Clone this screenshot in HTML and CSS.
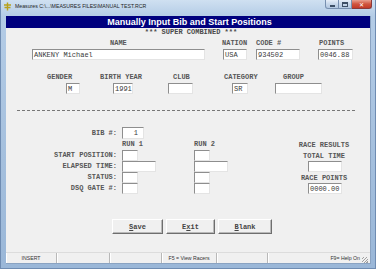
FILE: index.html
```html
<!DOCTYPE html>
<html lang="en">
<head>
    <meta charset="UTF-8">
    <title>Measures - Manual Test</title>
    <link rel="stylesheet" href="styles.css">
</head>
<body>
    <div class="window">
        <div class="titlebar">
            <svg class="app-icon" width="9" height="9" viewBox="0 0 9 9">
                <path d="M4.5 0.5v8M1 3h7M1.5 5.5h6" stroke="#b8a11a" stroke-width="1.4" fill="none"/>
            </svg>
            <span class="title">Measures C:\...\MEASURES FILES\MANUAL TEST.RCR</span>
            <div class="controls">
                <span class="ctl ctl-min"><i></i></span>
                <span class="ctl ctl-max"><i></i></span>
                <span class="ctl ctl-close">&#x2715;</span>
            </div>
        </div>
        <div class="frame">
            <div class="client">
                <div class="header">Manually Input Bib and Start Positions</div>
                <div class="subtitle">*** SUPER COMBINED ***</div>

                <div class="row row-one">
                    <div class="field f-name">
                        <span class="lbl">NAME</span>
                        <span class="box">ANKENY Michael</span>
                    </div>
                    <div class="field f-nation">
                        <span class="lbl">NATION</span>
                        <span class="box">USA</span>
                    </div>
                    <div class="field f-code">
                        <span class="lbl">CODE #</span>
                        <span class="box">934502</span>
                    </div>
                    <div class="field f-points">
                        <span class="lbl">POINTS</span>
                        <span class="box">0046.88</span>
                    </div>
                </div>

                <div class="row row-two">
                    <div class="field f-gender">
                        <span class="lbl">GENDER</span>
                        <span class="box">M</span>
                    </div>
                    <div class="field f-birth">
                        <span class="lbl">BIRTH YEAR</span>
                        <span class="box">1991</span>
                    </div>
                    <div class="field f-club">
                        <span class="lbl">CLUB</span>
                        <span class="box"></span>
                    </div>
                    <div class="field f-cat">
                        <span class="lbl">CATEGORY</span>
                        <span class="box">SR</span>
                    </div>
                    <div class="field f-group">
                        <span class="lbl">GROUP</span>
                        <span class="box"></span>
                    </div>
                </div>

                <div class="divider"></div>

                <div class="runs">
                    <span class="rl">BIB #:</span>
                    <span class="cell"><span class="box bib">1</span></span>
                    <span></span>
                    <span></span>

                    <span></span>
                    <span class="head">RUN 1</span>
                    <span class="head">RUN 2</span>
                    <span class="res">RACE RESULTS</span>

                    <span class="rl">START POSITION:</span>
                    <span class="cell"><span class="box small"></span></span>
                    <span class="cell"><span class="box small"></span></span>
                    <span class="res">TOTAL TIME</span>

                    <span class="rl">ELAPSED TIME:</span>
                    <span class="cell"><span class="box wide"></span></span>
                    <span class="cell"><span class="box wide"></span></span>
                    <span class="res"><span class="box result"></span></span>

                    <span class="rl">STATUS:</span>
                    <span class="cell"><span class="box small"></span></span>
                    <span class="cell"><span class="box small"></span></span>
                    <span class="res">RACE POINTS</span>

                    <span class="rl">DSQ GATE #:</span>
                    <span class="cell"><span class="box small"></span></span>
                    <span class="cell"><span class="box small"></span></span>
                    <span class="res"><span class="box result">0000.00</span></span>
                </div>

                <div class="buttons">
                    <button class="btn btn-save" type="button"><u>S</u>ave</button>
                    <button class="btn btn-exit" type="button">E<u>x</u>it</button>
                    <button class="btn btn-blank" type="button"><u>B</u>lank</button>
                </div>

                <div class="statusbar">
                    <span class="panel p1">INSERT</span>
                    <span class="panel p2"></span>
                    <span class="panel p3"></span>
                    <span class="panel p4">F5 = View Racers</span>
                    <span class="panel p5"></span>
                    <span class="panel p6">F9= Help On<span class="grip"></span></span>
                </div>
            </div>
        </div>
    </div>
</body>
</html>
```

FILE: styles.css
```css
* {
    box-sizing: border-box;
}
body {
    margin: 0;
    width: 376px;
    height: 269px;
    overflow: hidden;
    background-color: #a9c3df;
    font-family: "Liberation Mono", monospace;
}
.window {
    width: 376px;
    height: 269px;
    display: flex;
    flex-direction: column;
    background: linear-gradient(180deg, #cfe0f1 0, #b4cce6 16px, #a4bfdd 60%, #9ab7d8 100%);
    border-left: 1px solid #6f8cb2;
    border-right: 1px solid #6f8cb2;
    border-bottom: 1px solid #6f8cb2;
}
.titlebar {
    height: 16px;
    display: flex;
    align-items: flex-start;
    flex-shrink: 0;
}
.app-icon {
    margin: 2px 0 0 2px;
}
.title {
    margin: 3px 0 0 3px;
    font-family: "Liberation Sans", Arial, sans-serif;
    font-size: 5.2px;
    line-height: 7px;
    color: #1e1e1e;
    white-space: nowrap;
}
.controls {
    margin-left: auto;
    margin-right: 3px;
    display: flex;
}
.ctl {
    height: 9px;
    display: flex;
    align-items: center;
    justify-content: center;
    border: 1px solid #7890b0;
    border-top: none;
    background: linear-gradient(180deg, #e6eef8 0, #c7d7ea 50%, #b3c8e1 100%);
}
.ctl-min {
    width: 14px;
    border-radius: 0 0 0 3px;
}
.ctl-min i {
    width: 5px;
    height: 2px;
    margin-top: 3px;
    background: #3d4f66;
}
.ctl-max {
    width: 13px;
    border-left: none;
}
.ctl-max i {
    width: 6px;
    height: 5px;
    border: 1px solid #3d4f66;
    border-top-width: 2px;
}
.ctl-close {
    width: 20px;
    border-left: none;
    border-radius: 0 0 3px 0;
    border-color: #8a3a3a;
    background: linear-gradient(180deg, #e8a090 0, #d0553f 50%, #c23a28 100%);
    color: #ffffff;
    font-family: "DejaVu Sans", sans-serif;
    font-size: 6px;
    font-weight: bold;
}
.frame {
    flex: 1;
    display: flex;
    padding: 0 4px 4px 5px;
}
.client {
    flex: 1;
    display: flex;
    flex-direction: column;
    background-color: #f0f0f0;
    border: 1px solid #8aa3c2;
    border-top: none;
    border-left: none;
}

.header {
    height: 12px;
    background-color: #00007e;
    color: #ffffff;
    font-family: "Liberation Sans", Arial, sans-serif;
    font-weight: bold;
    font-size: 9px;
    line-height: 12px;
    text-align: center;
    padding-left: 3px;
}
.subtitle {
    height: 8px;
    font-size: 7px;
    line-height: 8px;
    font-weight: bold;
    color: #4a4a4a;
    text-align: center;
    padding-left: 6px;
}
.row {
    display: flex;
}
.row-one {
    margin-top: 3px;
}
.row-two {
    margin-top: 13px;
}
.field {
    display: flex;
    flex-direction: column;
    gap: 2px;
}
.lbl {
    height: 8px;
    font-size: 7px;
    line-height: 8px;
    font-weight: bold;
    color: #575757;
    white-space: nowrap;
}
.box {
    display: block;
    height: 11px;
    padding: 1px 0 0 1px;
    background-color: #ffffff;
    border-top: 1px solid #8e8e8e;
    border-left: 1px solid #8e8e8e;
    border-right: 1px solid #e4e4e4;
    border-bottom: 1px solid #e4e4e4;
    font-size: 7px;
    line-height: 9px;
    color: #3a3a3a;
    white-space: nowrap;
}

.f-name { margin-left: 26px; width: 173px; }
.f-name .lbl { margin-left: 78px; }
.f-nation { margin-left: 17px; width: 26px; }
.f-nation .box { margin-left: 1px; width: 24px; }
.f-code { margin-left: 8px; width: 44px; }
.f-points { margin-left: 18px; width: 35px; }
.f-points .lbl { margin-left: 1px; }

.f-gender { margin-left: 41px; width: 33px; }
.f-gender .box { margin-left: 19px; width: 14px; }
.f-birth { margin-left: 20px; width: 42px; }
.f-birth .box { margin-left: 13px; width: 20px; }
.f-club { margin-left: 26px; width: 25px; }
.f-club .lbl { margin-left: 5px; }
.f-cat { margin-left: 31px; width: 34px; }
.f-cat .box { margin-left: 8px; width: 16px; }
.f-group { margin-left: 17px; width: 47px; }
.f-group .lbl { margin-left: 8px; }

.divider {
    height: 1px;
    margin: 16px 13px 0 11px;
    background: repeating-linear-gradient(90deg, #777 0 3px, transparent 3px 5px);
}

.runs {
    margin-top: 16px;
    display: grid;
    grid-template-columns: 116px 72px 104px 52px;
    grid-template-rows: 12px 11px 11px 11px 11px 11px;
    font-size: 7px;
    font-weight: bold;
    color: #575757;
}
.rl {
    text-align: right;
    padding-right: 5px;
    line-height: 11px;
    white-space: nowrap;
}
.runs .rl:first-child {
    line-height: 13px;
}
.head {
    line-height: 11px;
}
.res {
    display: flex;
    justify-content: center;
    align-items: center;
    white-space: nowrap;
}
.box.bib {
    width: 22px;
    height: 12px;
    text-align: right;
    padding-right: 5px;
    font-weight: normal;
}
.box.small {
    width: 16px;
}
.box.wide {
    width: 34px;
}
.box.result {
    width: 34px;
    margin-left: 2px;
    font-weight: normal;
}

.buttons {
    margin: 25px 0 0 106px;
    display: flex;
    gap: 3px;
}
.btn {
    height: 15px;
    padding: 0;
    background-color: #f0f0f0;
    border-top: 1px solid #ffffff;
    border-left: 1px solid #ffffff;
    border-right: 1px solid #6e6e6e;
    border-bottom: 1px solid #6e6e6e;
    box-shadow: inset -1px -1px 0 #b9b9b9;
    font-family: "Liberation Mono", monospace;
    font-size: 7px;
    font-weight: bold;
    color: #444;
}
.btn-save { width: 51px; }
.btn-exit { width: 49px; }
.btn-blank { width: 54px; }

.statusbar {
    margin-top: auto;
    height: 11px;
    display: flex;
    border-top: 1px solid #dcdcdc;
    font-family: "Liberation Sans", Arial, sans-serif;
    font-size: 5.2px;
    color: #333;
}
.panel {
    display: flex;
    align-items: center;
    justify-content: center;
    border-right: 1px solid #b8b8b8;
    box-shadow: inset 1px 0 0 #ffffff;
    white-space: nowrap;
}
.p1 { width: 51px; }
.p2 { width: 53px; }
.p3 { width: 52px; }
.p4 { width: 55px; }
.p5 { width: 51px; }
.p6 {
    flex: 1;
    justify-content: flex-end;
    padding-right: 2px;
    border-right: none;
}
.grip {
    width: 6px;
    height: 6px;
    margin-left: 2px;
    align-self: flex-end;
    background: repeating-linear-gradient(135deg, transparent 0 1px, #a0a0a0 1px 2px);
}
```
